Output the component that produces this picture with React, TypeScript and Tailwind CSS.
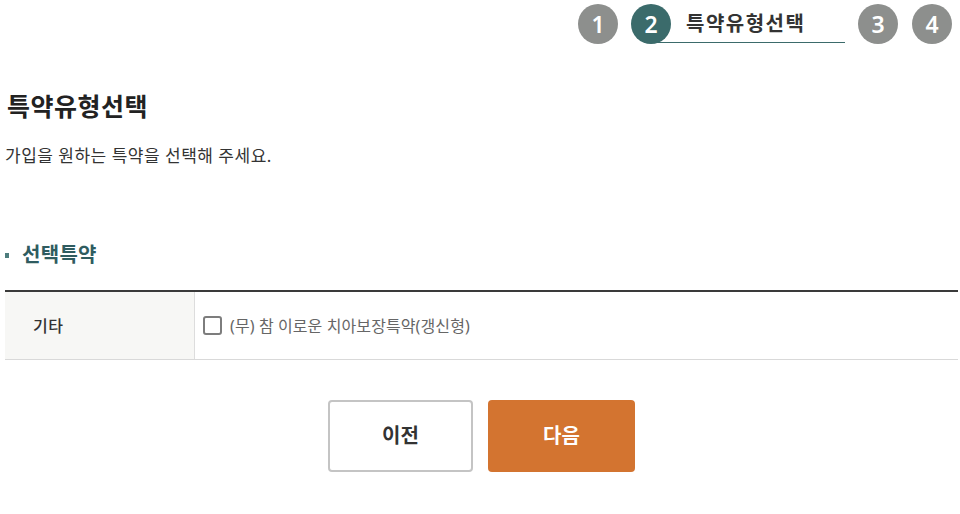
import { useState } from 'react';

const font = { fontFamily: '"Noto Sans", "Noto Sans CJK KR", sans-serif' };

function StepDot({ n, active }: { n: number; active?: boolean }) {
  return (
    <div
      className={
        'relative z-10 flex h-[40px] w-[40px] items-center justify-center rounded-full text-[23px] font-semibold text-white ' +
        (active ? 'bg-[#3b6b6b]' : 'bg-[#8d8f8d]')
      }
    >
      {n}
    </div>
  );
}

export default function App() {
  const [checked, setChecked] = useState(false);

  return (
    <div className="min-h-[514px] w-full bg-white text-[#333]" style={font}>
      {/* step indicator */}
      <div className="flex items-center justify-end pr-[8px] pt-[4px]">
        <StepDot n={1} />
        <div className="relative ml-[13px] flex items-center">
          <StepDot n={2} active />
          <span className="ml-[15px] w-[159px] text-[20px] font-bold leading-[40px] tracking-[1.5px] text-[#333]">특약유형선택</span>
          <div className="absolute bottom-[1px] left-[21px] right-0 h-px bg-[#3b6b6b]" />
        </div>
        <div className="ml-[13px]">
          <StepDot n={3} />
        </div>
        <div className="ml-[14px]">
          <StepDot n={4} />
        </div>
      </div>

      <div className="pl-[5px] pr-[2px]">
        <h1 className="mt-[44px] pl-[2px] text-[25px] font-bold leading-[36px] tracking-[0.5px] text-[#222]">특약유형선택</h1>
        <p className="mt-[20px] text-[17px] leading-[24px] tracking-[0.5px] text-[#333]">가입을 원하는 특약을 선택해 주세요.</p>

        <h2 className="mt-[73px] flex items-center text-[20px] font-bold leading-[28px] tracking-[0.3px] text-[#2f5c60]">
          <span className="mr-[13px] h-[5px] w-[4px] bg-[#4d7d7d]" />
          선택특약
        </h2>

        <div className="mt-[21px] border-t-2 border-[#3a3a3a]">
          <div className="flex h-[68px] border-b border-[#d9d9d9]">
            <div className="flex w-[190px] items-center border-r border-[#dddddd] bg-[#f7f7f5] pl-[28px] text-[16px] font-medium tracking-[0.5px] text-[#333]">
              기타
            </div>
            <label className="flex flex-1 cursor-pointer items-center pl-[8px] text-[16px] tracking-[0.1px] text-[#666]">
              <input
                type="checkbox"
                checked={checked}
                onChange={() => setChecked(!checked)}
                className="mr-[8px] h-[19px] w-[19px] cursor-pointer appearance-none rounded-[3px] border-2 border-[#7d7d7d] bg-white checked:bg-[#3b6b6b]"
              />
              (무) 참 이로운 치아보장특약(갱신형)
            </label>
          </div>
        </div>

        <div className="mt-[40px] flex justify-center gap-[15px]">
          <button className="h-[72px] w-[145px] rounded-[4px] border-2 border-[#c4c4c4] bg-white text-[20px] font-bold text-[#333]">
            이전
          </button>
          <button className="h-[72px] w-[147px] rounded-[4px] bg-[#d37430] text-[20px] font-bold text-white">
            다음
          </button>
        </div>
      </div>
    </div>
  );
}
